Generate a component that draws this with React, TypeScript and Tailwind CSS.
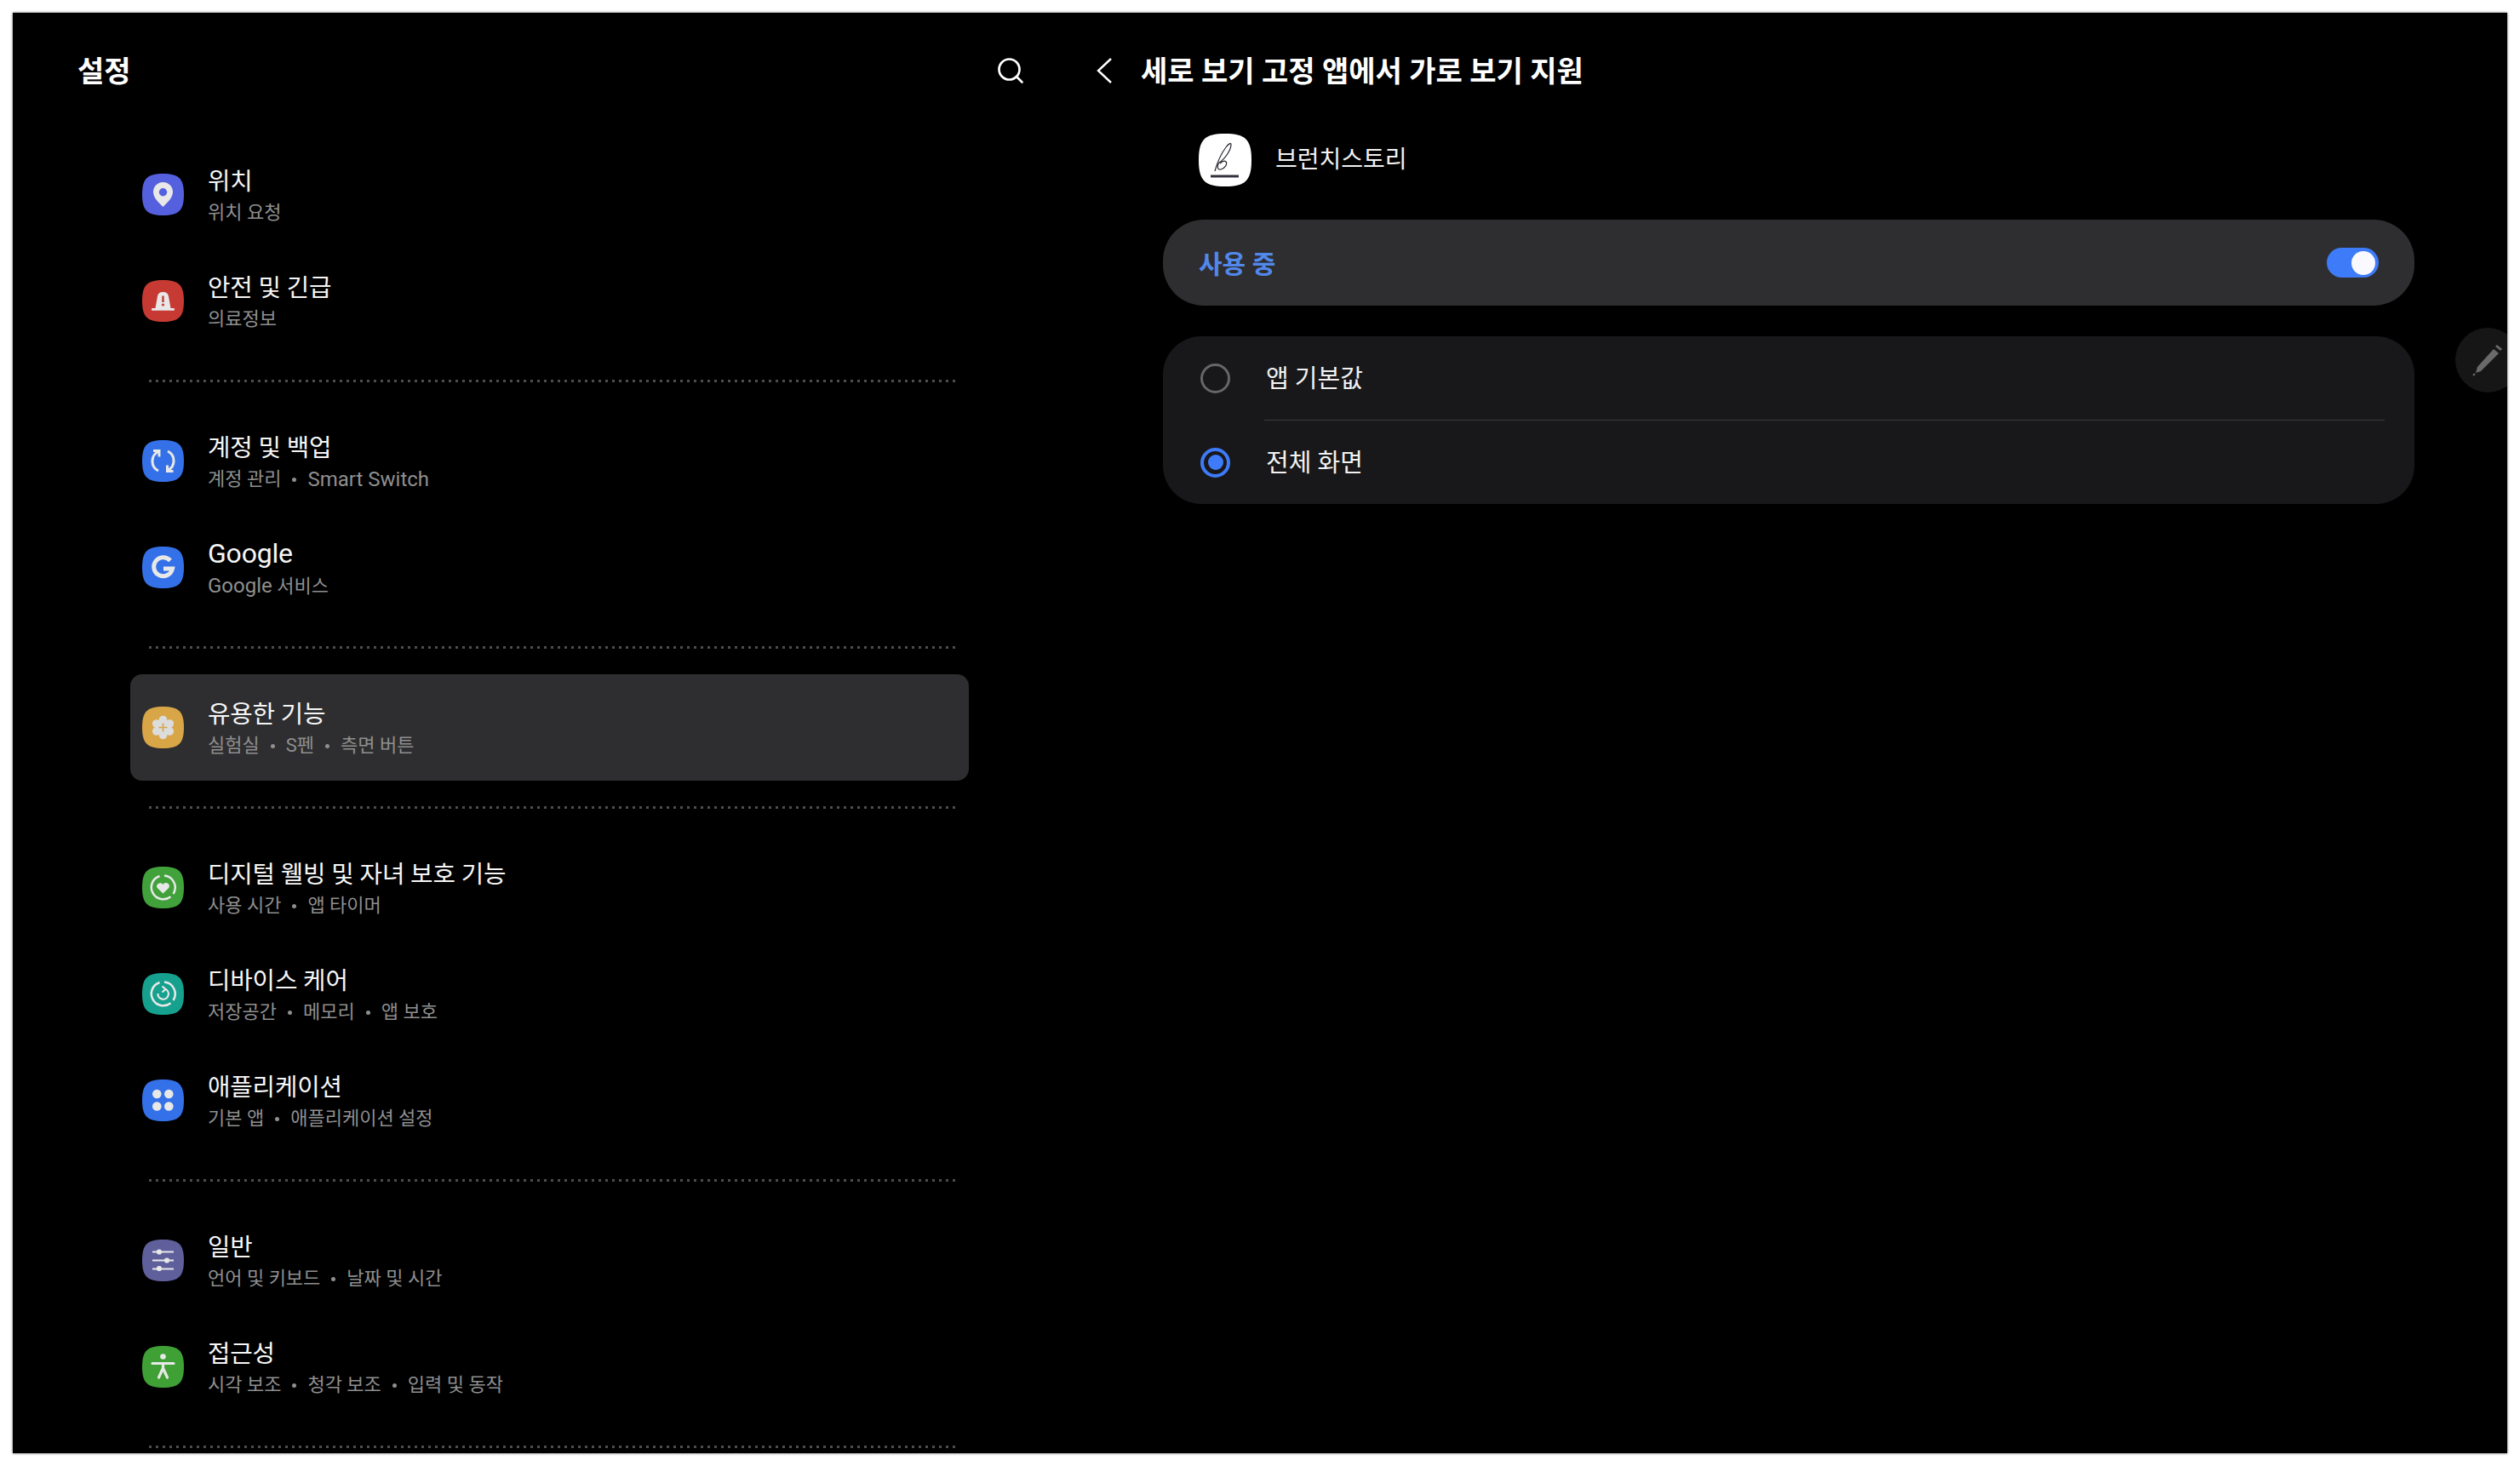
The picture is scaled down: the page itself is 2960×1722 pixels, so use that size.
import { Search } from "lucide-react";
import type { ReactNode } from "react";

const FONT = "[font-family:Roboto,'Noto_Sans_CJK_KR',sans-serif]";
const SQUIRCLE = "M24.5 0C43 0 49 6 49 24.5S43 49 24.5 49 0 43 0 24.5 6 0 24.5 0Z";
const INK = "#e8e8e8";

function AppIcon({ color, children }: { color: string; children: ReactNode }) {
  return (
    <svg viewBox="0 0 49 49" className="w-[49px] h-[49px] shrink-0">
      <path d={SQUIRCLE} fill={color} />
      {children}
    </svg>
  );
}

const icons = {
  location: (
    <AppIcon color="#5560de">
      <path
        fillRule="evenodd"
        fill={INK}
        d="M24.5 10a11.5 11.5 0 0 0-11.5 11.5c0 7 7 13 11.5 17.5 4.5-4.5 11.5-10.5 11.5-17.5A11.5 11.5 0 0 0 24.5 10Zm0 7a4.7 4.7 0 1 1 0 9.4 4.7 4.7 0 0 1 0-9.4Z"
      />
    </AppIcon>
  ),
  safety: (
    <AppIcon color="#c73a33">
      <path fill={INK} d="M15.500 33 18 19q.8-5 6.500-5t6.500 5l2.500 14Z" />
      <rect x="11" y="33" width="27" height="2.800" rx="1" fill={INK} />
      <rect x="23.300" y="18.500" width="2.400" height="7.500" fill="#c73a33" />
      <circle cx="24.500" cy="29" r="1.600" fill="#c73a33" />
    </AppIcon>
  ),
  sync: (
    <AppIcon color="#3471e8">
      <g fill="none" stroke={INK} strokeWidth="3">
        <path d="M19 13.500A12.500 12.500 0 0 0 19 36" />
        <path d="M13 12.500h7v7" />
        <path d="M30 13A12.500 12.500 0 0 1 30 35.500" />
        <path d="M36.500 36.500h-7v-7" />
      </g>
    </AppIcon>
  ),
  google: (
    <AppIcon color="#3471e8">
      <path
        fill="none"
        stroke={INK}
        strokeWidth="5"
        d="M33 16.500A11 11 0 1 0 35.500 26H25"
      />
    </AppIcon>
  ),
  labs: (
    <AppIcon color="#d8a547">
      <g fill="#dcdcdc">
        <circle cx="24.500" cy="24.500" r="9.500" />
        <circle cx="24.500" cy="15.500" r="4.800" />
        <circle cx="24.500" cy="33.500" r="4.800" />
        <circle cx="16.700" cy="20" r="4.800" />
        <circle cx="32.300" cy="20" r="4.800" />
        <circle cx="16.700" cy="29" r="4.800" />
        <circle cx="32.300" cy="29" r="4.800" />
      </g>
      <path d="M24.500 19.500v10M19.500 24.500h10" stroke="#d8a547" strokeWidth="1.600" />
    </AppIcon>
  ),
  wellbeing: (
    <AppIcon color="#41a13a">
      <g fill="none" stroke={INK} strokeWidth="2.500">
        <path d="M26 10.500A14 14 0 0 1 36.500 32" />
        <path d="M33.500 35.300A14 14 0 1 1 20.500 11" />
      </g>
      <path
        fill={INK}
        d="M24.500 31.500 18 25.300c-3.500-3.800 3.500-9 6.500-4.300 3-4.700 10-.5 6.500 4.300Z"
      />
    </AppIcon>
  ),
  care: (
    <AppIcon color="#16a18e">
      <g fill="none" stroke={INK} strokeWidth="2.500">
        <path d="M26 10.500A14 14 0 0 1 36.500 32" />
        <path d="M33.500 35.300A14 14 0 1 1 20.500 11" />
        <path d="M27 18.800A6.200 6.200 0 1 1 18.500 24" strokeWidth="2.200" />
        <path d="M23.500 15.500 27.500 19l-4 3.500" strokeWidth="2.200" />
      </g>
    </AppIcon>
  ),
  apps: (
    <AppIcon color="#3471e8">
      <g fill={INK}>
        <circle cx="17.300" cy="17" r="5.300" />
        <circle cx="31.300" cy="17" r="5.300" />
        <circle cx="17.300" cy="31.500" r="5.300" />
        <circle cx="31.300" cy="31.500" r="5.300" />
      </g>
    </AppIcon>
  ),
  general: (
    <AppIcon color="#5f5f9c">
      <g stroke={INK} strokeWidth="1.800">
        <path d="M12 14.500h25M12 24.500h25M12 34.500h25" />
      </g>
      <g fill={INK}>
        <circle cx="20" cy="14.500" r="3.100" />
        <circle cx="29" cy="24.500" r="3.100" />
        <circle cx="20" cy="34" r="3.100" />
      </g>
    </AppIcon>
  ),
  access: (
    <AppIcon color="#3fa035">
      <circle cx="24.500" cy="12.500" r="3.300" fill={INK} />
      <path
        d="M12 20.500h25M24.500 21v6M24.500 26l-5 11M24.500 26l5 11"
        fill="none"
        stroke={INK}
        strokeWidth="3.200"
        strokeLinecap="round"
      />
    </AppIcon>
  ),
};

function Row({
  icon,
  title,
  sub,
  active,
}: {
  icon: ReactNode;
  title: ReactNode;
  sub: ReactNode[];
  active?: boolean;
}) {
  return (
    <div
      className={`h-[125px] flex items-center gap-[28px] pl-[14px] rounded-[14px] ${
        active ? "bg-[#2e2e30]" : ""
      }`}
    >
      {icon}
      <div className="flex flex-col gap-[4px] mt-[3px]">
        <div className="text-[28.800px] leading-[36px] text-[#f6f6f6] tracking-[-0.2px]">{title}</div>
        <div className="text-[22px] leading-[30px] text-[#8f8f8f] flex items-center whitespace-nowrap">
          {sub.map((s, i) => (
            <span key={i} className="flex items-center">
              {i > 0 && <span className="w-[5px] h-[5px] rounded-full bg-[#8f8f8f] mx-[13px]" />}
              {s}
            </span>
          ))}
        </div>
      </div>
    </div>
  );
}

function Divider() {
  return (
    <div className="h-[63px] flex items-center pl-[22px] pr-[15px]">
      <div className="h-[3px] w-full bg-[linear-gradient(to_right,#4d4d4d_3px,transparent_3px)] bg-[length:8px_3px] bg-repeat-x" />
    </div>
  );
}

export default function App() {
  return (
    <div className={`w-[2960px] h-[1722px] bg-white p-[15px] ${FONT}`}>
      <div className="relative w-[2930px] h-[1692px] bg-black flex overflow-hidden shadow-[0_0_3px_rgba(0,0,0,0.6)]">
        <aside className="w-[1255px] shrink-0">
          <div className="h-[136px] flex items-center justify-between pl-[76px] pr-[65px]">
            <h1 className="text-[34px] font-bold text-white mt-[3px]">설정</h1>
            <Search className="w-[36px] h-[36px] text-white" strokeWidth={1.800} />
          </div>
          <div className="mt-[15px] ml-[138px] w-[985px]">
            <Row icon={icons.location} title="위치" sub={["위치 요청"]} />
            <Row icon={icons.safety} title="안전 및 긴급" sub={["의료정보"]} />
            <Divider />
            <Row
              icon={icons.sync}
              title="계정 및 백업"
              sub={["계정 관리", <span className="text-[24px]">Smart Switch</span>]}
            />
            <Row
              icon={icons.google}
              title={<span className="text-[32px]">Google</span>}
              sub={[
                <span>
                  <span className="text-[24px]">Google</span> 서비스
                </span>,
              ]}
            />
            <Divider />
            <Row icon={icons.labs} title="유용한 기능" sub={["실험실", "S펜", "측면 버튼"]} active />
            <Divider />
            <Row
              icon={icons.wellbeing}
              title="디지털 웰빙 및 자녀 보호 기능"
              sub={["사용 시간", "앱 타이머"]}
            />
            <Row icon={icons.care} title="디바이스 케어" sub={["저장공간", "메모리", "앱 보호"]} />
            <Row
              icon={icons.apps}
              title="애플리케이션"
              sub={["기본 앱", "애플리케이션 설정"]}
            />
            <Divider />
            <Row icon={icons.general} title="일반" sub={["언어 및 키보드", "날짜 및 시간"]} />
            <Row
              icon={icons.access}
              title="접근성"
              sub={["시각 보조", "청각 보조", "입력 및 동작"]}
            />
            <Divider />
          </div>
        </aside>

        <main className="flex-1">
          <div className="h-[136px] flex items-center pl-[18px] gap-[34px]">
            <svg viewBox="0 0 18 30" className="w-[18px] h-[30px]">
              <path d="M17 1 2 15l15 14" fill="none" stroke="#ffffff" strokeWidth="2.400" />
            </svg>
            <h2 className="text-[34px] font-bold text-white mt-[3px]">
              세로 보기 고정 앱에서 가로 보기 지원
            </h2>
          </div>
          <div className="ml-[138px] mt-[6px] flex items-center gap-[28px]">
            <svg viewBox="0 0 62 62" className="w-[62px] h-[62px]">
              <path
                d="M31 0C55 0 62 7 62 31S55 62 31 62 0 55 0 31 7 0 31 0Z"
                fill="#ffffff"
              />
              <path
                d="M14 50h33"
                stroke="#33333f"
                strokeWidth="3"
              />
              <path
                d="M19 44c3-11 7-20 13-28 3-4 6-6 6-3 0 5-6 16-14 21-3 4-2 9 2 8 5-1 8-7 6-9-2-2-5 0-7 2"
                fill="none"
                stroke="#26262e"
                strokeWidth="1.200"
              />
            </svg>
            <span className="text-[28px] text-[#f2f2f2]">브런치스토리</span>
          </div>

          <div className="ml-[96px] mt-[39px] w-[1470px] h-[101px] rounded-[48px] bg-[#2e2e30] flex items-center justify-between pl-[42px] pr-[42px]">
            <span className="text-[30px] font-semibold text-[#5188ea] mt-[3px]">사용 중</span>
            <div className="w-[61px] h-[35px] rounded-full bg-[#3e7bf8] flex items-center justify-end pr-[4px]">
              <div className="w-[28px] h-[28px] rounded-full bg-[#f9f9ff]" />
            </div>
          </div>

          <div className="ml-[96px] mt-[36px] w-[1470px] h-[197px] rounded-[45px] bg-[#18181a] pl-[44px] pr-[35px] flex flex-col">
            <div className="h-[98px] flex items-center gap-[42px]">
              <div className="w-[35px] h-[35px] rounded-full border-[3px] border-[#666666]" />
              <span className="text-[29px] text-[#f2f2f2] mt-[3px]">앱 기본값</span>
            </div>
            <div className="h-[1px] bg-[#3d3d3d] ml-[75px]" />
            <div className="h-[98px] flex items-center gap-[42px]">
              <div className="w-[35px] h-[35px] rounded-full border-[4px] border-[#3e7bf8] flex items-center justify-center">
                <div className="w-[18px] h-[18px] rounded-full bg-[#3e7bf8]" />
              </div>
              <span className="text-[29px] text-[#f2f2f2] mt-[3px]">전체 화면</span>
            </div>
          </div>
        </main>

        {/* floating pen button, cut off by the window edge */}
        <div className="absolute left-[2869px] top-[370px] w-[76px] h-[76px] rounded-full bg-[#161616] flex items-center justify-center">
          <svg viewBox="0 0 40 40" className="w-[40px] h-[40px]">
            <path d="M27 7 33 12 12 33 6 35 8 28Z" fill="#6a6a6a" />
            <path d="M29 4 31 2 37 7 35 9Z" fill="#6a6a6a" />
            <path d="M3 38 5 36" stroke="#6a6a6a" strokeWidth="2" />
          </svg>
        </div>
      </div>
    </div>
  );
}
